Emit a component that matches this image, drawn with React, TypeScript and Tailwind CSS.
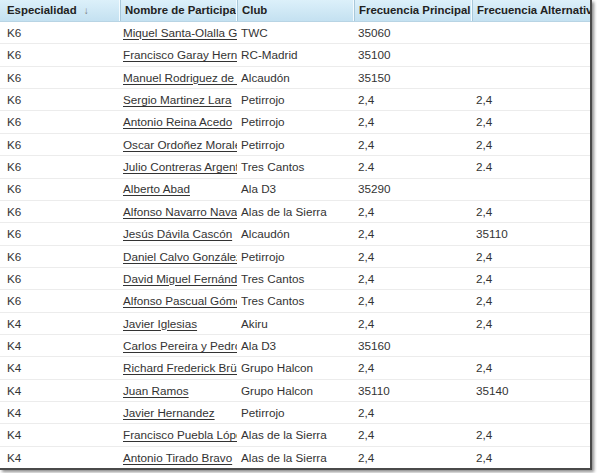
const rows: [string, string, string, string, string][] = [
  ["K6", "Miquel Santa-Olalla García", "TWC", "35060", ""],
  ["K6", "Francisco Garay Hernández", "RC-Madrid", "35100", ""],
  ["K6", "Manuel Rodriguez de la Fuente", "Alcaudón", "35150", ""],
  ["K6", "Sergio Martinez Lara", "Petirrojo", "2,4", "2,4"],
  ["K6", "Antonio Reina Acedo", "Petirrojo", "2,4", "2,4"],
  ["K6", "Oscar Ordoñez Morales", "Petirrojo", "2,4", "2,4"],
  ["K6", "Julio Contreras Argente", "Tres Cantos", "2.4", "2.4"],
  ["K6", "Alberto Abad", "Ala D3", "35290", ""],
  ["K6", "Alfonso Navarro Navarro", "Alas de la Sierra", "2,4", "2,4"],
  ["K6", "Jesús Dávila Cascón", "Alcaudón", "2,4", "35110"],
  ["K6", "Daniel Calvo González", "Petirrojo", "2,4", "2,4"],
  ["K6", "David Miguel Fernández", "Tres Cantos", "2,4", "2,4"],
  ["K6", "Alfonso Pascual Gómez", "Tres Cantos", "2,4", "2,4"],
  ["K4", "Javier Iglesias", "Akiru", "2,4", "2,4"],
  ["K4", "Carlos Pereira y Pedro", "Ala D3", "35160", ""],
  ["K4", "Richard Frederick Brüning", "Grupo Halcon", "2,4", "2,4"],
  ["K4", "Juan Ramos", "Grupo Halcon", "35110", "35140"],
  ["K4", "Javier Hernandez", "Petirrojo", "2,4", ""],
  ["K4", "Francisco Puebla López", "Alas de la Sierra", "2,4", "2,4"],
  ["K4", "Antonio Tirado Bravo", "Alas de la Sierra", "2,4", "2,4"],
];

const cols = "grid grid-cols-[120px_117px_117px_118px_118px]";

export default function App() {
  return (
    <div className="w-[597px] h-[473px] bg-white overflow-hidden" style={{ fontFamily: '"Liberation Sans", Arial, sans-serif' }}>
      <div className="w-[592px] h-[470px] bg-white border-r-2 border-b-2 border-[#4a4a4a] shadow-[2px_2px_3px_rgba(0,0,0,0.45)] overflow-hidden">
        <div className={`${cols} h-[22px] bg-gradient-to-b from-[#dcf0fa] to-[#c4e1f1] border-b border-[#b8d4e4] text-[11.4px] font-bold text-[#222]`}>
          <div className="pl-[7px] flex items-center border-r border-[#f4fbff]">
            Especialidad <span className="ml-[7px] text-[10px] text-[#777] font-normal">↓</span>
          </div>
          <div className="pl-[4px] flex items-center border-l border-[#a9c8da] border-r border-r-[#f4fbff] whitespace-nowrap overflow-hidden">Nombre de Participante</div>
          <div className="pl-[4px] flex items-center border-l border-[#a9c8da] border-r border-r-[#f4fbff]">Club</div>
          <div className="pl-[4px] flex items-center border-l border-[#a9c8da] border-r border-r-[#f4fbff] whitespace-nowrap overflow-hidden">Frecuencia Principal</div>
          <div className="pl-[4px] flex items-center border-l border-[#a9c8da] whitespace-nowrap overflow-hidden">Frecuencia Alternativa</div>
        </div>
        {rows.map((r, i) => (
          <div key={i} className={`${cols} h-[22.37px] border-b border-[#ececec] text-[11.7px] text-[#333] items-center`}>
            <div className="pl-[7px]">{r[0]}</div>
            <div className="pl-[3px] whitespace-nowrap overflow-hidden underline underline-offset-2">{r[1]}</div>
            <div className="pl-[4px] whitespace-nowrap overflow-hidden">{r[2]}</div>
            <div className="pl-[4px]">{r[3]}</div>
            <div className="pl-[4px]">{r[4]}</div>
          </div>
        ))}
      </div>
    </div>
  );
}
